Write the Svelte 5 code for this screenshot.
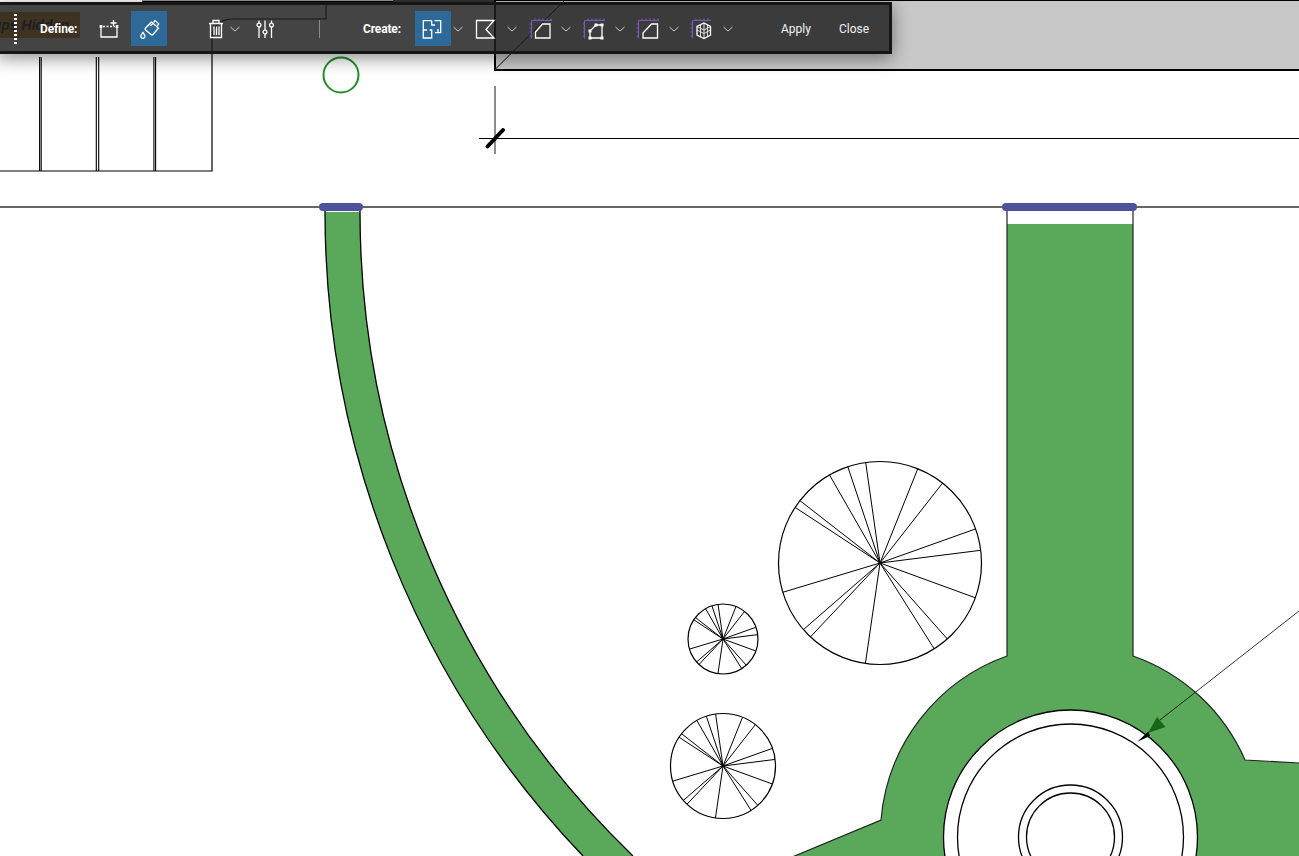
<script>
  const spokes = [
    [287,35],[443,55],[517,98],[616,235],[631,299],[615,441],[532,565],[493,595],
    [286,640],[122,558],[100,537],[38,425],[75,170],[90,150],[178,72],[233,47]
  ].map(([x, y]) => [(x - 330) / 3 / 101.5, (y - 337) / 3 / 101.5]);
  const trees = [
    { cx: 880, cy: 563, r: 101.5 },
    { cx: 723, cy: 639, r: 35 },
    { cx: 723, cy: 766, r: 52.5 }
  ];
  const posts = [[39.6, 41.2], [96.3, 98.7], [153.9, 155.6]];
  const rings = [127, 113, 52, 44];
</script>

<div class="page">
  <svg class="drawing" width="1299" height="856" viewBox="0 0 1299 856">
    <rect x="0" y="12" width="80" height="26" fill="#d8923c" />
    <text x="69" y="30" text-anchor="end" class="hidden-label">Groups Hidden</text>

    <rect x="142" y="0" width="251" height="3" fill="#999" />
    <rect x="393" y="0" width="102" height="3" fill="#333" />
    <path d="M142.5 4V1.5H393V4" fill="none" stroke="#000" stroke-width="1" />
    <path d="M326 2V19H234Q212 19 212 40V171H0" fill="none" stroke="#000" stroke-width="1.2" />
    {#each posts as [a, b]}
      <path d="M{a} 57V171M{b} 57V171" stroke="#000" stroke-width="1.1" fill="none" />
    {/each}

    <rect x="495" y="0" width="806" height="70" fill="#c8c8c8" stroke="#000" stroke-width="2" />
    <line x1="495" y1="69.5" x2="565" y2="0" stroke="#000" stroke-width="1" />

    <circle cx="341" cy="75" r="17.5" fill="none" stroke="#1f8f2a" stroke-width="2" />

    <line x1="495" y1="86" x2="495" y2="154" stroke="#666" stroke-width="1.5" />
    <line x1="479" y1="138.5" x2="1299" y2="138.5" stroke="#000" stroke-width="1" />
    <line x1="487.5" y1="146.5" x2="503" y2="130" stroke="#000" stroke-width="4" stroke-linecap="round" />

    <line x1="0" y1="207" x2="1299" y2="207" stroke="#333" stroke-width="1.3" />

    <path d="M325 212A932.8 932.8 0 0 0 583 856H633A896 896 0 0 1 360 212Z" fill="#5aa95a" />
    <path d="M325 207V212A932.8 932.8 0 0 0 583 856M633 856A896 896 0 0 1 360 212V207" fill="none" stroke="#000" stroke-width="1.3" />

    <path d="M1007 224H1133V656A191 191 0 0 1 1245 760L1299 763V860H785L881 820A191 191 0 0 1 1007 656Z" fill="#5aa95a" />
    <path d="M1007 207V656A191 191 0 0 0 881 820L785 860" fill="none" stroke="#222" stroke-width="1.2" />
    <path d="M1133 207V656A191 191 0 0 1 1245 760L1299 763" fill="none" stroke="#222" stroke-width="1.2" />

    {#each rings as r}
      <circle cx="1070.5" cy="837" {r} fill="#fff" stroke="#000" stroke-width="1.3" />
    {/each}

    <line x1="1299" y1="611" x2="1160" y2="720" stroke="#000" stroke-width="0.8" />
    <path d="M1157 717L1165.5 727L1148 733Z" fill="#17661a" />
    <path d="M1148.3 731.5L1150 736L1137.3 741.7Z" fill="#000" />

    <line x1="323" y1="207" x2="359" y2="207" stroke="#4f5199" stroke-width="8" stroke-linecap="round" />
    <line x1="1006" y1="207" x2="1133" y2="207" stroke="#4f5199" stroke-width="8" stroke-linecap="round" />

    {#each trees as t}
      <circle cx={t.cx} cy={t.cy} r={t.r} fill="#fff" stroke="#000" stroke-width="1.2" />
      {#each spokes as [dx, dy]}
        <line x1={t.cx} y1={t.cy} x2={t.cx + dx * t.r} y2={t.cy + dy * t.r} stroke="#000" stroke-width="1" />
      {/each}
    {/each}
  </svg>

  <div class="toolbar">
    <span class="grip"></span>
    <span class="label define">Define:</span>

    <span class="tool add">
      <svg viewBox="0 0 24 24"><path d="M6 9.5H18" stroke-dasharray="2 1.5" /><path d="M4 9.5V20H20V9.5" /><path d="M16.5 3V9M13.5 6H19.5" /><rect x="2.6" y="8.1" width="2.8" height="2.8" class="solid" /><rect x="18.6" y="8.1" width="2.8" height="2.8" class="solid" /></svg>
    </span>
    <span class="tool active paint">
      <svg viewBox="0 0 24 24"><path d="M14.5 5L21.5 11L16 17.5Q15 18.5 14 17.6L8.6 13Q7.6 12 8.6 11Z" /><path d="M16.5 5.5L18 3.6L21.8 6.8L20.2 8.8" /><path d="M13 9L16 6.5" /><path d="M6 15.5Q3.5 18.5 3.8 19.8A2.2 2.2 0 0 0 8 19.8Q8.3 18.5 6 15.5Z" /></svg>
    </span>
    <span class="tool trash">
      <svg viewBox="0 0 24 24"><path d="M5 6.5H19M9 6.5V3.5H15V6.5" /><path d="M6.5 6.5V20.5H17.5V6.5" /><path d="M10 9.5V18M12.5 9.5V18M15 9.5V18" /></svg>
    </span>
    <span class="chev"><svg viewBox="0 0 14 14"><path d="M2.5 5L7 9L11.5 5" /></svg></span>
    <span class="tool sliders">
      <svg viewBox="0 0 24 24"><path d="M4 3.5V6M4 10V21M10 3.5V13M10 17V21M16.5 3.5V6M16.5 10V21" /><circle cx="4" cy="8" r="1.9" /><circle cx="10" cy="15" r="1.9" /><circle cx="16.5" cy="8" r="1.9" /></svg>
    </span>
    <span class="divider"></span>

    <span class="label create">Create:</span>
    <span class="tool active plan">
      <svg viewBox="0 0 24 24"><path d="M10.7 3.7H2.3V13H6" /><path d="M13.5 3.7H19.7V15.7H14" /><path d="M2.3 13V21H10.7V13H8.5" /><path d="M10.7 3.7V8H14" /><path d="M17 15.7V12" /></svg>
    </span>
    <span class="chev"><svg viewBox="0 0 14 14"><path d="M2.5 5L7 9L11.5 5" /></svg></span>

    <span class="tool m8"><svg viewBox="0 0 24 24"><path d="M3.5 3.5H21L13 12.5L21 21H3.5Z" /></svg></span>
    <span class="chev m8"><svg viewBox="0 0 14 14"><path d="M2.5 5L7 9L11.5 5" /></svg></span>

    <span class="tool m10">
      <svg viewBox="0 0 24 24"><path class="purple" d="M2.5 3.5H23M2.5 3.5V21.5M6 1.5V3.5M10 1.5V3.5M14 1.5V3.5M18 1.5V3.5M22 1.5V3.5M.5 7H2.5M.5 11H2.5M.5 15H2.5M.5 19H2.5" /><path d="M6.5 21V15L13.5 7H21V21Z" /></svg>
    </span>
    <span class="chev m6"><svg viewBox="0 0 14 14"><path d="M2.5 5L7 9L11.5 5" /></svg></span>

    <span class="tool m11">
      <svg viewBox="0 0 24 24"><path class="purple" d="M.5 3.5H21M.5 3.5V21.5M4 1.5V3.5M8 1.5V3.5M12 1.5V3.5M16 1.5V3.5M20 1.5V3.5M-1 7H.5M-1 11H.5M-1 15H.5M-1 19H.5" /><path d="M18 8H12L6 14V21H18Z" /><rect x="16.5" y="6.5" width="3" height="3" class="solid" /><rect x="10.5" y="6.5" width="3" height="3" class="solid" /><rect x="4.5" y="12.5" width="3" height="3" class="solid" /><rect x="4.5" y="19.5" width="3" height="3" class="solid" /><rect x="16.5" y="19.5" width="3" height="3" class="solid" /></svg>
    </span>
    <span class="chev m5"><svg viewBox="0 0 14 14"><path d="M2.5 5L7 9L11.5 5" /></svg></span>

    <span class="tool m10">
      <svg viewBox="0 0 24 24"><path class="purple" d="M1.5 3.5H22M1.5 3.5V21.5M5 1.5V3.5M9 1.5V3.5M13 1.5V3.5M17 1.5V3.5M21 1.5V3.5M-.5 7H1.5M-.5 11H1.5M-.5 15H1.5M-.5 19H1.5" /><path d="M6 21V16L14.5 7H20.5V21Z" /></svg>
    </span>
    <span class="chev m6"><svg viewBox="0 0 14 14"><path d="M2.5 5L7 9L11.5 5" /></svg></span>

    <span class="tool m10">
      <svg viewBox="0 0 24 24"><path class="purple" d="M1.5 3.5H20M1.5 3.5V21.5M5 1.5V3.5M9 1.5V3.5M13 1.5V3.5M17 1.5V3.5M-.5 7H1.5M-.5 11H1.5M-.5 15H1.5M-.5 19H1.5" /><path d="M13 6L19.5 9.5V18L13 21.5L6 18V9.5Z" /><path d="M6 9.5L13 13L19.5 9.5M13 6V21.5M6 13L13 16.5L19.5 13M9.5 8V19.5M16.5 8V19.5" class="thin" /></svg>
    </span>
    <span class="chev m6"><svg viewBox="0 0 14 14"><path d="M2.5 5L7 9L11.5 5" /></svg></span>

    <span class="text-btn apply">Apply</span>
    <span class="text-btn close">Close</span>
  </div>
</div>

<style>
  :global(body) {
    margin: 0;
    background: #fff;
    overflow: hidden;
  }

  .page {
    position: relative;
    width: 1299px;
    height: 856px;
    overflow: hidden;
    background: #fff;
  }

  .drawing {
    position: absolute;
    left: 0;
    top: 0;
    display: block;
  }

  .hidden-label {
    font: italic 700 14px "Liberation Sans", sans-serif;
    fill: #222;
  }

  .toolbar {
    position: absolute;
    left: -3px;
    top: 2px;
    width: 895px;
    height: 52px;
    box-sizing: border-box;
    border: 3px solid #161616;
    padding: 1px 0 0 14px;
    display: flex;
    align-items: center;
    background: rgba(30, 30, 30, 0.83);
    box-shadow: 0 4px 18px rgba(0, 0, 0, 0.45);
    font-family: Roboto, "Liberation Sans", sans-serif;
    color: #fff;
  }

  .grip {
    width: 3px;
    height: 30px;
    background: repeating-linear-gradient(#fff 0 2px, transparent 2px 4px);
  }

  .label {
    font-size: 12px;
    font-weight: 700;
    line-height: 16px;
    width: 37px;
    letter-spacing: -0.15px;
    white-space: nowrap;
  }

  .define { margin-left: 23px; }
  .create { margin-left: 43px; }

  .tool {
    width: 24px;
    height: 24px;
    flex: none;
    display: flex;
    align-items: center;
    justify-content: center;
  }

  .tool svg {
    width: 24px;
    height: 24px;
    overflow: visible;
    fill: none;
    stroke: #fff;
    stroke-width: 1.3;
  }

  .tool .solid { fill: #fff; stroke: none; }
  .tool .purple { stroke: #7a57b8; stroke-width: 1.2; }
  .tool .thin { stroke-width: 0.8; }

  .active {
    width: 36px;
    height: 35px;
    background: #2d6a9a;
  }

  .add { margin-left: 20px; }
  .paint { margin-left: 10px; }
  .trash { margin-left: 37px; }
  .sliders { margin-left: 13px; }
  .plan { margin-left: 15px; }

  .chev {
    width: 14px;
    height: 14px;
    flex: none;
  }

  .chev svg {
    display: block;
    width: 14px;
    height: 14px;
    fill: none;
    stroke: #d8d8d8;
    stroke-width: 0.9;
  }

  .m5 { margin-left: 5px; }
  .m6 { margin-left: 6px; }
  .m8 { margin-left: 8px; }
  .m10 { margin-left: 10px; }
  .m11 { margin-left: 11px; }

  .divider {
    width: 1px;
    height: 18px;
    margin-left: 40px;
    background: #8a8a8a;
  }

  .text-btn {
    font-size: 12px;
    line-height: 16px;
    color: #f2f2f2;
    white-space: nowrap;
  }

  .apply { margin-left: 46px; width: 31px; }
  .close { margin-left: 27px; }
</style>
